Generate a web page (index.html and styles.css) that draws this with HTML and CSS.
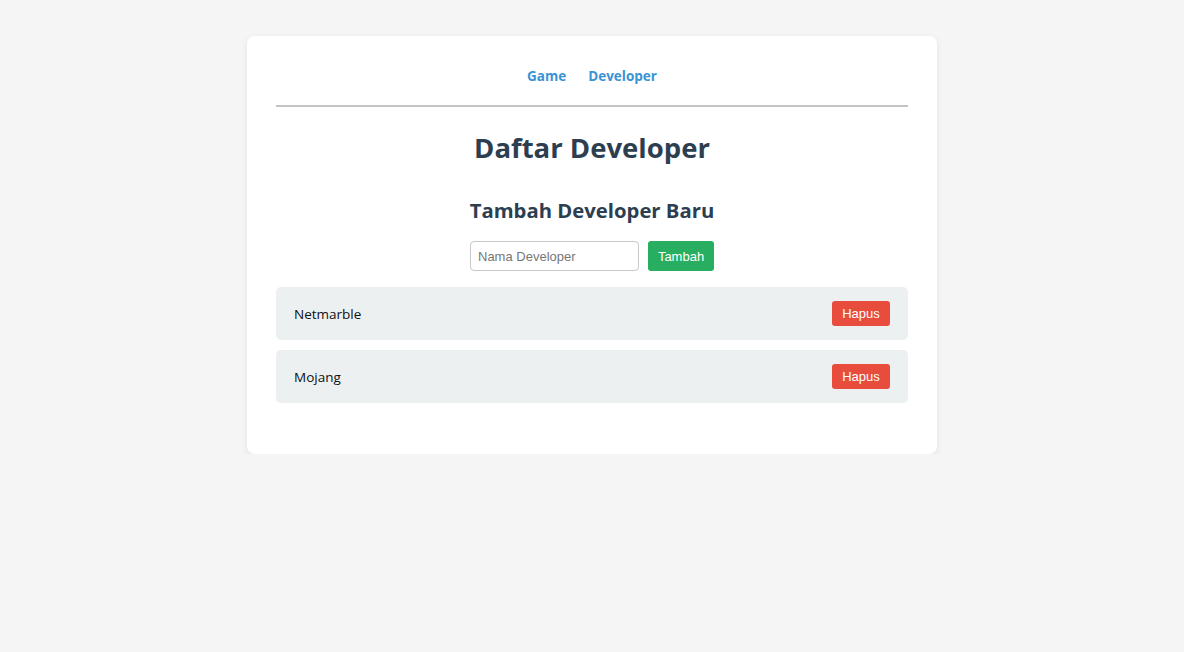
FILE: index.html
```html
<!DOCTYPE html>
<html lang="id">
<head>
<meta charset="utf-8">
<title>Daftar Developer</title>
<link rel="stylesheet" href="styles.css">
</head>
<body>
<div class="card">
  <nav class="nav">
    <a href="#" class="nav-link">Game</a>
    <a href="#" class="nav-link">Developer</a>
  </nav>
  <hr class="divider">
  <h1 class="title">Daftar Developer</h1>
  <h2 class="subtitle">Tambah Developer Baru</h2>
  <form class="add-form">
    <input class="add-input" type="text" placeholder="Nama Developer">
    <button class="btn btn-add" type="button">Tambah</button>
  </form>
  <ul class="dev-list">
    <li class="dev-item"><span class="dev-name">Netmarble</span><button class="btn btn-delete" type="button">Hapus</button></li>
    <li class="dev-item"><span class="dev-name">Mojang</span><button class="btn btn-delete" type="button">Hapus</button></li>
  </ul>
</div>
</body>
</html>
```
FILE: styles.css
```css
* { box-sizing: border-box; }
html, body { margin: 0; padding: 0; }
body {
  background: #f5f5f5;
  font-family: "Open Sans", "Noto Sans", sans-serif;
  color: #222;
  padding-top: 36px;
}
.card {
  width: 690px;
  margin: 0 auto;
  background: #fff;
  border-radius: 8px;
  box-shadow: 0 2px 6px rgba(0,0,0,0.08);
  padding: 29px 29px 51px;
}
.nav {
  display: flex;
  justify-content: center;
  gap: 22px;
  height: 22px;
  align-items: center;
}
.nav-link {
  color: #3a93d4;
  font-weight: 700;
  font-size: 13.5px;
  text-decoration: none;
}
.divider {
  border: 0;
  border-top: 2px solid #c4c4c4;
  margin: 18px 0 0;
}
.title {
  text-align: center;
  font-size: 27.5px;
  font-weight: 700;
  color: #2c3e50;
  margin: 21px 0 0;
  line-height: 40px;
}
.subtitle {
  text-align: center;
  font-size: 20.3px;
  font-weight: 700;
  color: #2c3e50;
  margin: 27px 0 0;
  line-height: 30px;
}
.add-form {
  display: flex;
  justify-content: center;
  gap: 9px;
  margin-top: 16px;
}
.add-input {
  width: 169px;
  height: 30px;
  border: 1px solid #c8c8c8;
  border-radius: 4px;
  padding: 0 7px;
  font-family: "Liberation Sans", Arial, sans-serif;
  font-size: 13px;
  color: #333;
}
.add-input::placeholder { color: #777; }
.btn {
  border: 0;
  border-radius: 3px;
  color: #fff;
  font-family: "Liberation Sans", Arial, sans-serif;
  font-size: 13px;
  cursor: pointer;
}
.btn-add {
  background: #27ae60;
  width: 66px;
  height: 30px;
}
.dev-list {
  list-style: none;
  margin: 16px 0 0;
  padding: 0;
  display: flex;
  flex-direction: column;
  gap: 10px;
}
.dev-item {
  background: #ecf0f1;
  border-radius: 5px;
  height: 53px;
  display: flex;
  align-items: center;
  justify-content: space-between;
  padding: 0 18px 0 18px;
}
.dev-name {
  font-size: 13.5px;
  color: #111;
}
.btn-delete {
  background: #e74c3c;
  width: 58px;
  height: 25px;
}
```
